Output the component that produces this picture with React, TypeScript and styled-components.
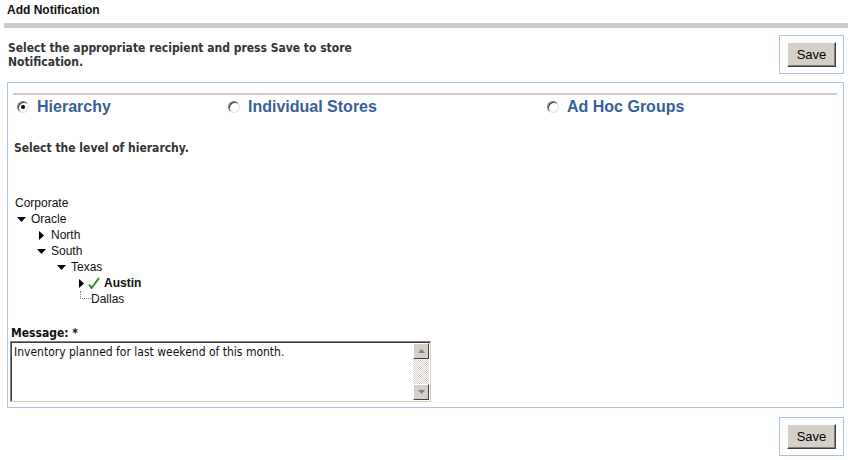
import React from "react";
import styled, { createGlobalStyle } from "styled-components";

const GlobalStyle = createGlobalStyle`
  body {
    margin: 0;
    background: #fff;
    font-family: "Liberation Sans", Arial, sans-serif;
    color: #222;
  }
`;

const Page = styled.div`
  width: 852px;
  height: 460px;
  overflow: hidden;
`;

const Title = styled.div`
  font-size: 12px;
  font-weight: bold;
  line-height: 14px;
  padding: 3px 7px 6px;
  color: #111;
`;

const Rule = styled.div`
  height: 5px;
  margin: 0 4px;
  background: #cccccc;
`;

const ActionRow = styled.div`
  display: flex;
  justify-content: space-between;
  align-items: center;
  padding: 7px 8px 0 8px;
`;

const Instruction = styled.div`
  width: 360px;
  font-family: "DejaVu Sans Condensed", "DejaVu Sans", sans-serif;
  font-size: 12px;
  font-weight: bold;
  line-height: 14px;
  color: #333;
`;

const ButtonFrame = styled.div`
  border: 1px solid #a8c6e2;
  padding: 6px 7px 6px 7px;
  display: flex;
`;

const SaveButton = styled.button`
  width: 49px;
  height: 25px;
  padding: 0;
  font-family: "Liberation Sans", Arial, sans-serif;
  font-size: 13px;
  color: #000;
  background: #d4d0c8;
  border: 1px solid;
  border-color: #fff #404040 #404040 #fff;
  box-shadow: inset -1px -1px 0 #808080;
`;

const Panel = styled.div`
  margin: 8px 8px 0 7px;
  border: 1px solid #a8c6e2;
  padding: 10px 6px 5px 5px;
`;

const TabRule = styled.div`
  border-top: 2px solid #cccccc;
`;

const ChoiceRow = styled.div`
  display: grid;
  grid-template-columns: 211px 319px 1fr;
  padding: 2px 0 0 4px;
  height: 20px;
  align-items: center;
`;

const Choice = styled.label`
  display: flex;
  align-items: center;
  gap: 8px;
  font-size: 16px;
  font-weight: bold;
  color: #3a5f98;
`;

const RadioDot = styled.span<{ checked?: boolean }>`
  position: relative;
  width: 10px;
  height: 10px;
  border-radius: 50%;
  border: 1px solid;
  border-color: #7a7a7a #e0e0e0 #e0e0e0 #7a7a7a;
  background: #fff;
  box-shadow: inset 1px 1px 0 #404040;

  &::after {
    content: "";
    display: ${p => (p.checked ? "block" : "none")};
    position: absolute;
    left: 3px;
    top: 3px;
    width: 4px;
    height: 4px;
    border-radius: 50%;
    background: #000;
  }
`;

const Hint = styled.div`
  margin: 24px 0 0 1px;
  font-family: "DejaVu Sans Condensed", "DejaVu Sans", sans-serif;
  font-size: 12px;
  font-weight: bold;
  line-height: 14px;
  color: #333;
`;

const Tree = styled.div`
  margin: 40px 0 0 2px;
  font-size: 12px;
  color: #111;
`;

const TreeRow = styled.div<{ level: number }>`
  display: flex;
  align-items: center;
  height: 16px;
  padding-left: ${p => (p.level < 0 ? 0 : 2 + p.level * 20)}px;
`;

const Toggle = styled.span`
  display: inline-flex;
  width: 14px;
  height: 16px;
  align-items: center;
`;

const Leaf = styled.span`
  width: 10px;
  height: 7px;
  margin: 0 0 6px 3px;
  border-left: 1px dotted #888;
  border-bottom: 1px dotted #888;
  align-self: flex-start;
`;

const CheckMark = styled.span`
  display: inline-flex;
  margin-left: -3px;
`;

const Selected = styled.span`
  font-weight: bold;
  margin-left: 4px;
`;

const Label = styled.div`
  margin: 19px 0 0 -2px;
  font-family: "DejaVu Sans Condensed", "DejaVu Sans", sans-serif;
  font-size: 12px;
  font-weight: bold;
  line-height: 14px;
  color: #111;
`;

const MessageBox = styled.div`
  margin: 1px 0 0 -3px;
  width: 421px;
  height: 61px;
  box-sizing: border-box;
  display: flex;
  border: 1px solid;
  border-color: #808080 #d4d0c8 #d4d0c8 #808080;
  box-shadow: inset 1px 1px 0 #404040, inset -1px -1px 0 #ffffff;
`;

const MessageText = styled.div`
  flex: 1;
  padding: 3px 3px;
  font-family: "DejaVu Sans Condensed", "Liberation Sans", sans-serif;
  font-size: 12px;
  line-height: 14px;
  color: #111;
`;

const ScrollBar = styled.div`
  width: 16px;
  margin: 1px 1px 1px 0;
  display: flex;
  flex-direction: column;
  background: repeating-conic-gradient(#ffffff 0 25%, #d4d0c8 0 50%) 0 0 / 2px 2px;
`;

const ScrollButton = styled.div`
  height: 16px;
  box-sizing: border-box;
  display: flex;
  align-items: center;
  justify-content: center;
  background: #d4d0c8;
  border: 1px solid;
  border-color: #fff #404040 #404040 #fff;
`;

const ScrollTrack = styled.div`
  flex: 1;
`;

const BottomRow = styled.div`
  display: flex;
  justify-content: flex-end;
  padding: 9px 8px 0 0;
`;

const Caret = ({ open }: { open: boolean }) =>
  open ? (
    <svg width="9" height="5" viewBox="0 0 9 5">
      <path d="M0 0h9L4.5 5z" fill="#000" />
    </svg>
  ) : (
    <svg width="5" height="9" viewBox="0 0 5 9" style={{ marginLeft: 2 }}>
      <path d="M0 0v9l5-4.5z" fill="#000" />
    </svg>
  );

const Check = () => (
  <CheckMark>
    <svg width="12" height="12" viewBox="0 0 12 12">
      <path d="M1 7.5l2.5 3.5L11 1" stroke="#2d8a2d" strokeWidth="2" fill="none" />
    </svg>
  </CheckMark>
);

const Arrow = ({ up }: { up: boolean }) => (
  <svg width="7" height="4" viewBox="0 0 7 4">
    <path d={up ? "M0 4h7L3.5 0z" : "M0 0h7L3.5 4z"} fill="#808080" />
  </svg>
);

const App: React.FC = () => (
  <Page>
    <GlobalStyle />
    <Title>Add Notification</Title>
    <Rule />
    <ActionRow>
      <Instruction>
        Select the appropriate recipient and press Save to store Notification.
      </Instruction>
      <ButtonFrame>
        <SaveButton>Save</SaveButton>
      </ButtonFrame>
    </ActionRow>
    <Panel>
      <TabRule />
      <ChoiceRow>
        {[
          { label: "Hierarchy", checked: true },
          { label: "Individual Stores", checked: false },
          { label: "Ad Hoc Groups", checked: false }
        ].map(({ label, checked }) => (
          <Choice key={label}>
            <RadioDot checked={checked} />
            {label}
          </Choice>
        ))}
      </ChoiceRow>
      <Hint>Select the level of hierarchy.</Hint>
      <Tree>
        <TreeRow level={-1}>Corporate</TreeRow>
        <TreeRow level={0}>
          <Toggle><Caret open /></Toggle>Oracle
        </TreeRow>
        <TreeRow level={1}>
          <Toggle><Caret open={false} /></Toggle>North
        </TreeRow>
        <TreeRow level={1}>
          <Toggle><Caret open /></Toggle>South
        </TreeRow>
        <TreeRow level={2}>
          <Toggle><Caret open /></Toggle>Texas
        </TreeRow>
        <TreeRow level={3}>
          <Toggle><Caret open={false} /></Toggle>
          <Check />
          <Selected>Austin</Selected>
        </TreeRow>
        <TreeRow level={3}>
          <Leaf />Dallas
        </TreeRow>
      </Tree>
      <Label>Message: *</Label>
      <MessageBox>
        <MessageText>Inventory planned for last weekend of this month.</MessageText>
        <ScrollBar>
          <ScrollButton><Arrow up /></ScrollButton>
          <ScrollTrack />
          <ScrollButton><Arrow up={false} /></ScrollButton>
        </ScrollBar>
      </MessageBox>
    </Panel>
    <BottomRow>
      <ButtonFrame>
        <SaveButton>Save</SaveButton>
      </ButtonFrame>
    </BottomRow>
  </Page>
);

export default App;
